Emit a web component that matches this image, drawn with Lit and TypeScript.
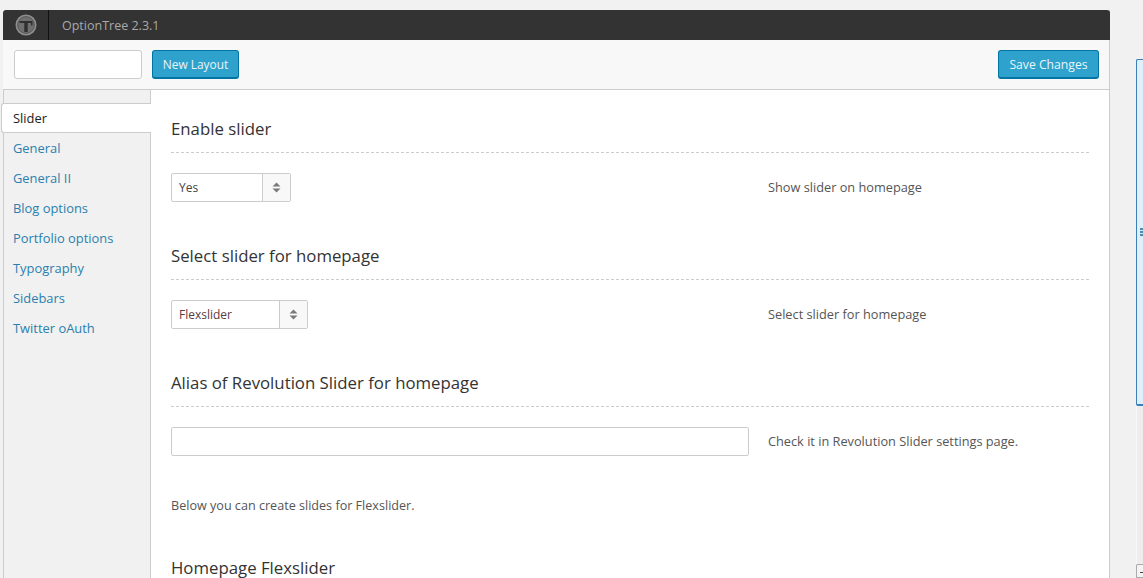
import { LitElement, html, css, svg } from "lit";
import { customElement } from "lit/decorators.js";

const arrows = svg`<svg class="arrows" width="9" height="11" viewBox="0 0 9 11"><path d="M4.5 0.5 L8.5 4.5 H0.5 Z M0.5 6.5 H8.5 L4.5 10.5 Z" fill="#7a7a7a"/></svg>`;

@customElement("app-root")
export class AppRoot extends LitElement {
  static styles = css`
    :host { display: block; width: 1143px; height: 578px; overflow: hidden; background: #f1f1f1; font-family: "Open Sans", sans-serif; font-size: 13px; color: #444; position: relative; }
    * { box-sizing: border-box; }
    .panel { position: absolute; left: 3px; top: 10px; width: 1107px; height: 600px; display: flex; flex-direction: column; background: #fff; border-right: 1px solid #ccc; }
    .header { height: 30px; background: #333; border-radius: 3px 3px 0 0; margin-right: -1px; display: flex; align-items: center; flex: none; }
    .logo { width: 46px; height: 30px; border-right: 1px solid #111; display: flex; align-items: center; justify-content: center; flex: none; }
    .version { margin-left: 13px; color: #a9a9a9; font-size: 12.5px; }
    .toolbar { height: 50px; flex: none; background: #f8f8f8; border-bottom: 1px solid #ccc; display: flex; align-items: center; padding: 0 10px 0 11px; }
    .search { width: 128px; height: 29px; background: #fff; border: 1px solid #ccc; border-radius: 3px; }
    .btn { height: 29px; background: #2ea2cc; border: 1px solid #0074a2; border-bottom-width: 2px; border-radius: 3px; color: #e8f5fa; font: 12.2px "Open Sans", sans-serif; display: flex; align-items: center; justify-content: center; }
    .new { margin-left: 10px; width: 87px; font-size: 11.9px; }
    .save { width: 101px; }
    .spacer { flex: 1; }
    .body { display: flex; flex: 1; }
    .side { width: 148px; flex: none; background: #f1f1f1; border-right: 1px solid #ccc; border-left: 1px solid #ccc; padding-top: 13px; display: flex; flex-direction: column; }
    .item { height: 30px; flex: none; display: flex; align-items: center; padding-left: 9px; color: #2b7fae; font-size: 12.9px; }
    .item.active { background: #fff; color: #222; margin-left: -3px; margin-right: -1px; padding-left: 11px; border: 1px solid #ccc; border-width: 1px 0 1px 1px; border-radius: 3px 0 0 3px; }
    .main { flex: 1; padding: 0 20px; min-width: 0; }
    .section { border-bottom: 1px dashed #ccc; font-size: 16.8px; color: #333; line-height: 24px; padding-bottom: 11px; }
    .section.first { margin-top: 27px; }
    .row { display: flex; margin-top: 20px; align-items: center; height: 29px; }
    .ctrl { width: 597px; flex: none; display: flex; align-items: center; }
    .select { height: 29px; border: 1px solid #ccc; border-radius: 2px; display: flex; background: #fff; font-size: 12px; color: #444; }
    .select .val { display: flex; align-items: center; padding-left: 7px; }
    .s1 .val { width: 90px; }
    .s2 .val { width: 107px; color: #5c3a3f; }
    .select .btnbox { width: 28px; border-left: 1px solid #ccc; background: #f8f8f8; display: flex; align-items: center; justify-content: center; }
    .input { width: 578px; height: 29px; border: 1px solid #ccc; border-radius: 2px; background: #fff; }
    .hint { color: #555; font-size: 12.75px; line-height: 29px; align-self: flex-start; }
    .gap { margin-top: 42px; }
    .note { margin-top: 41px; margin-bottom: -1px; font-size: 12.6px; color: #555; line-height: 18px; }
    .scroll { position: absolute; left: 1136px; top: 59px; width: 7px; height: 347px; background: #dff0fc; border: 1px solid #3b7fb5; border-bottom-width: 2px; border-right: none; border-radius: 2px 0 0 2px; }
    .grip { position: absolute; left: 3px; top: 168px; width: 4px; height: 9px; background: repeating-linear-gradient(#4a8fb0 0 2px, #cfe6f2 2px 3px); }
    .rail { position: absolute; left: 1136px; top: 406px; width: 7px; height: 158px; background: #ededed; border-left: 1px solid #f8f8f8; }
    .track { position: absolute; left: 1136px; top: 564px; width: 7px; height: 14px; border: 1px solid #aaa; border-right: none; background: #f4f4f4; border-radius: 2px 0 0 0; }
    .track i { position: absolute; left: 3px; top: 7px; width: 3px; height: 1px; background: #444; display: block; }
  `;
  render() {
    const items = ["General", "General II", "Blog options", "Portfolio options", "Typography", "Sidebars", "Twitter oAuth"];
    return html`
      <div class="panel">
        <div class="header">
          <div class="logo">
            <svg width="22" height="22" viewBox="0 0 22 22">
              <circle cx="11" cy="11" r="10.5" fill="#8e8e8e"/>
              <circle cx="11" cy="11" r="8.4" fill="#6f6f6f" stroke="#4e4e4e" stroke-width="0.8"/>
              <path d="M4.5 7 H17.5 V11.5 H16 V9 H12.7 V18 H9.3 V9 H4.5 Z" fill="#2f2f2f"/>
            </svg>
          </div>
          <span class="version">OptionTree 2.3.1</span>
        </div>
        <div class="toolbar">
          <div class="search"></div>
          <div class="btn new">New Layout</div>
          <div class="spacer"></div>
          <div class="btn save">Save Changes</div>
        </div>
        <div class="body">
          <div class="side">
            <div class="item active">Slider</div>
            ${items.map((i) => html`<div class="item">${i}</div>`)}
          </div>
          <div class="main">
            <div class="section first">Enable slider</div>
            <div class="row">
              <div class="ctrl"><div class="select s1"><div class="val">Yes</div><div class="btnbox">${arrows}</div></div></div>
              <div class="hint">Show slider on homepage</div>
            </div>
            <div class="section gap">Select slider for homepage</div>
            <div class="row">
              <div class="ctrl"><div class="select s2"><div class="val">Flexslider</div><div class="btnbox">${arrows}</div></div></div>
              <div class="hint">Select slider for homepage</div>
            </div>
            <div class="section gap">Alias of Revolution Slider for homepage</div>
            <div class="row">
              <div class="ctrl"><div class="input"></div></div>
              <div class="hint">Check it in Revolution Slider settings page.</div>
            </div>
            <div class="note">Below you can create slides for Flexslider.</div>
            <div class="section gap">Homepage Flexslider</div>
          </div>
        </div>
      </div>
      <div class="scroll"><div class="grip"></div></div>
      <div class="rail"></div>
      <div class="track"><i></i></div>
    `;
  }
}
